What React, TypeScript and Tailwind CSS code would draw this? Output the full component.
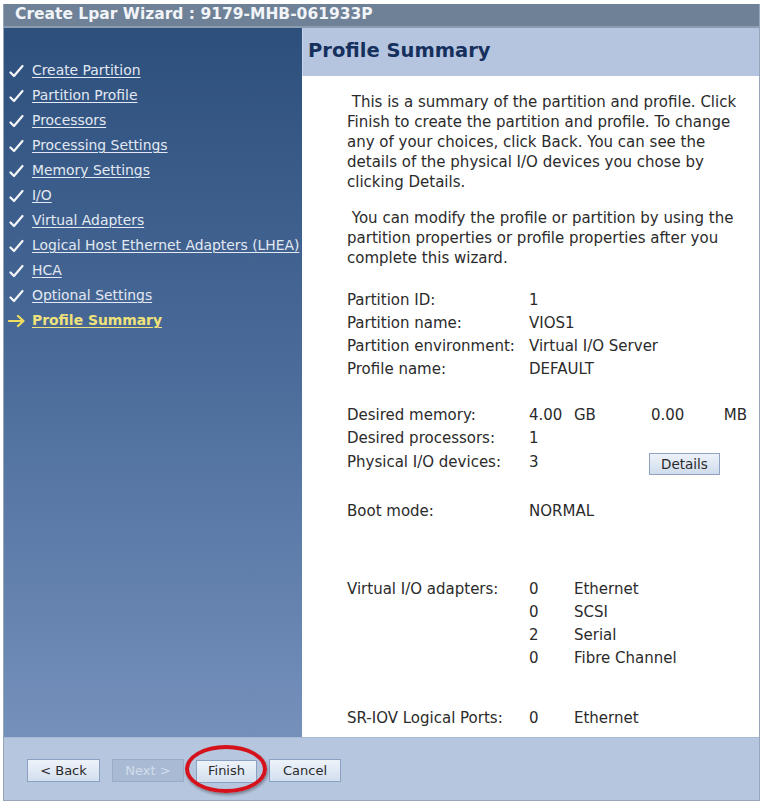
import React from "react";

const steps = [
  "Create Partition",
  "Partition Profile",
  "Processors",
  "Processing Settings",
  "Memory Settings",
  "I/O",
  "Virtual Adapters",
  "Logical Host Ethernet Adapters (LHEA)",
  "HCA",
  "Optional Settings",
];

function Check() {
  return (
    <svg width="15" height="14" viewBox="0 0 15 14" className="shrink-0">
      <path d="M1.5 8.5 L5 12 L13.5 2" fill="none" stroke="#f4f6fa" strokeWidth="2.2" strokeLinecap="round" strokeLinejoin="round" />
    </svg>
  );
}

function Arrow() {
  return (
    <svg width="17" height="14" viewBox="0 0 17 14" className="shrink-0">
      <path d="M1 7 H15 M10 2 L15.5 7 L10 12" fill="none" stroke="#f0df5e" strokeWidth="2.2" strokeLinecap="round" strokeLinejoin="round" />
    </svg>
  );
}

function Row({ label, value, children }: { label: string; value: string; children?: React.ReactNode }) {
  return (
    <div className="grid grid-cols-[182px_45px_77px_1fr] h-[23px] items-center">
      <span>{label}</span>
      <span>{value}</span>
      {children}
    </div>
  );
}

function Btn({ label, disabled, w }: { label: string; disabled?: boolean; w: string }) {
  return (
    <button
      type="button"
      className={`${w} h-[23px] text-[13px] border ${
        disabled
          ? "border-[#98acc8] bg-[#a9bbd4] text-[#d3dceb]"
          : "border-[#8aa1c1] bg-gradient-to-b from-[#eef3fa] to-[#d3dfee] text-[#2a2a2a]"
      }`}
    >
      {label}
    </button>
  );
}

export default function App() {
  return (
    <div className="w-[762px] h-[803px] bg-white pt-[4px] pl-[3px] pr-[2px] font-['DejaVu_Sans',sans-serif]">
      <div className="h-[797px] flex flex-col border-l border-r border-b border-[#97a6b8]">
        {/* title bar */}
        <div className="h-[24px] bg-[#6e8196] border-b-2 border-[#8c9db1] flex items-center pl-[11px] text-[15.5px] font-bold text-[#f1f4f8] whitespace-nowrap">
          Create Lpar Wizard : 9179-MHB-061933P
        </div>

        <div className="flex flex-1 min-h-0">
          {/* steps */}
          <div className="w-[298px] bg-gradient-to-b from-[#2d4f7c] via-[#4c6d9b] to-[#7590bb] pt-[30px] pl-[5px]">
            {steps.map((s) => (
              <div key={s} className="h-[25px] flex items-center gap-[8px] text-[13.9px] text-[#e3e9f2] whitespace-nowrap">
                <Check />
                <span className="underline underline-offset-2 decoration-1">{s}</span>
              </div>
            ))}
            <div className="h-[25px] flex items-center gap-[7px] -ml-[1px] text-[13.9px] font-bold text-[#f0e27a] whitespace-nowrap">
              <Arrow />
              <span className="underline underline-offset-2 decoration-1">Profile Summary</span>
            </div>
          </div>

          {/* main panel */}
          <div className="flex-1 flex flex-col">
            <div className="h-[48px] bg-[#b5c5df] border-l border-[#c9d5e8] pl-[5px] pt-[8px] text-[19.5px] font-bold text-[#16305e]">
              Profile Summary
            </div>
            <div className="flex-1 bg-white pl-[45px] pr-[10px] pt-[16px] text-[15px] leading-[20px] text-[#2b2b2b]">
              <p>&nbsp;This is a summary of the partition and profile. Click Finish to create the partition and profile. To change any of your choices, click Back. You can see the details of the physical I/O devices you chose by clicking Details.</p>
              <p className="mt-[16px]">&nbsp;You can modify the profile or partition by using the partition properties or profile properties after you complete this wizard.</p>

              <div className="mt-[20px]">
                <Row label="Partition ID:" value="1" />
                <Row label="Partition name:" value="VIOS1" />
                <div className="grid grid-cols-[182px_1fr] h-[23px] items-center">
                  <span className="whitespace-nowrap">Partition environment:</span>
                  <span className="whitespace-nowrap">Virtual I/O Server</span>
                </div>
                <Row label="Profile name:" value="DEFAULT" />
              </div>

              <div className="mt-[23px]">
                <Row label="Desired memory:" value="4.00">
                  <span>GB</span>
                  <span className="flex justify-between pr-[2px]">
                    <span>0.00</span>
                    <span>MB</span>
                  </span>
                </Row>
                <Row label="Desired processors:" value="1" />
                <div className="grid grid-cols-[182px_120px_1fr] h-[23px] items-center">
                  <span>Physical I/O devices:</span>
                  <span>3</span>
                  <span>
                    <button
                      type="button"
                      className="w-[71px] h-[22px] mt-[4px] text-[13.5px] border border-[#8ea4c2] bg-gradient-to-b from-[#edf2f9] to-[#cfdcec] text-[#2a2a2a]"
                    >
                      Details
                    </button>
                  </span>
                </div>
              </div>

              <div className="mt-[27px]">
                <Row label="Boot mode:" value="NORMAL" />
              </div>

              <div className="mt-[55px]">
                <Row label="Virtual I/O adapters:" value="0">
                  <span className="col-span-2">Ethernet</span>
                </Row>
                <Row label="" value="0">
                  <span className="col-span-2">SCSI</span>
                </Row>
                <Row label="" value="2">
                  <span className="col-span-2">Serial</span>
                </Row>
                <Row label="" value="0">
                  <span className="col-span-2">Fibre Channel</span>
                </Row>
              </div>

              <div className="mt-[37px]">
                <Row label="SR-IOV Logical Ports:" value="0">
                  <span className="col-span-2">Ethernet</span>
                </Row>
              </div>
            </div>
          </div>
        </div>

        {/* footer */}
        <div className="h-[63px] bg-[#b6c6de] border-t border-[#a8b9d2] flex items-center gap-[12px] pl-[23px] pt-[3px]">
          <Btn label="< Back" w="w-[73px]" />
          <Btn label="Next >" w="w-[72px]" disabled />
          <div className="relative">
            <Btn label="Finish" w="w-[61px]" />
            <div className="absolute -left-[11px] -top-[13px] w-[82px] h-[48px] rounded-[50%] border-[4px] border-[#d5121b] shadow-[1px_2px_3px_rgba(0,0,0,0.35)]" />
          </div>
          <Btn label="Cancel" w="w-[72px]" />
        </div>
      </div>
    </div>
  );
}
